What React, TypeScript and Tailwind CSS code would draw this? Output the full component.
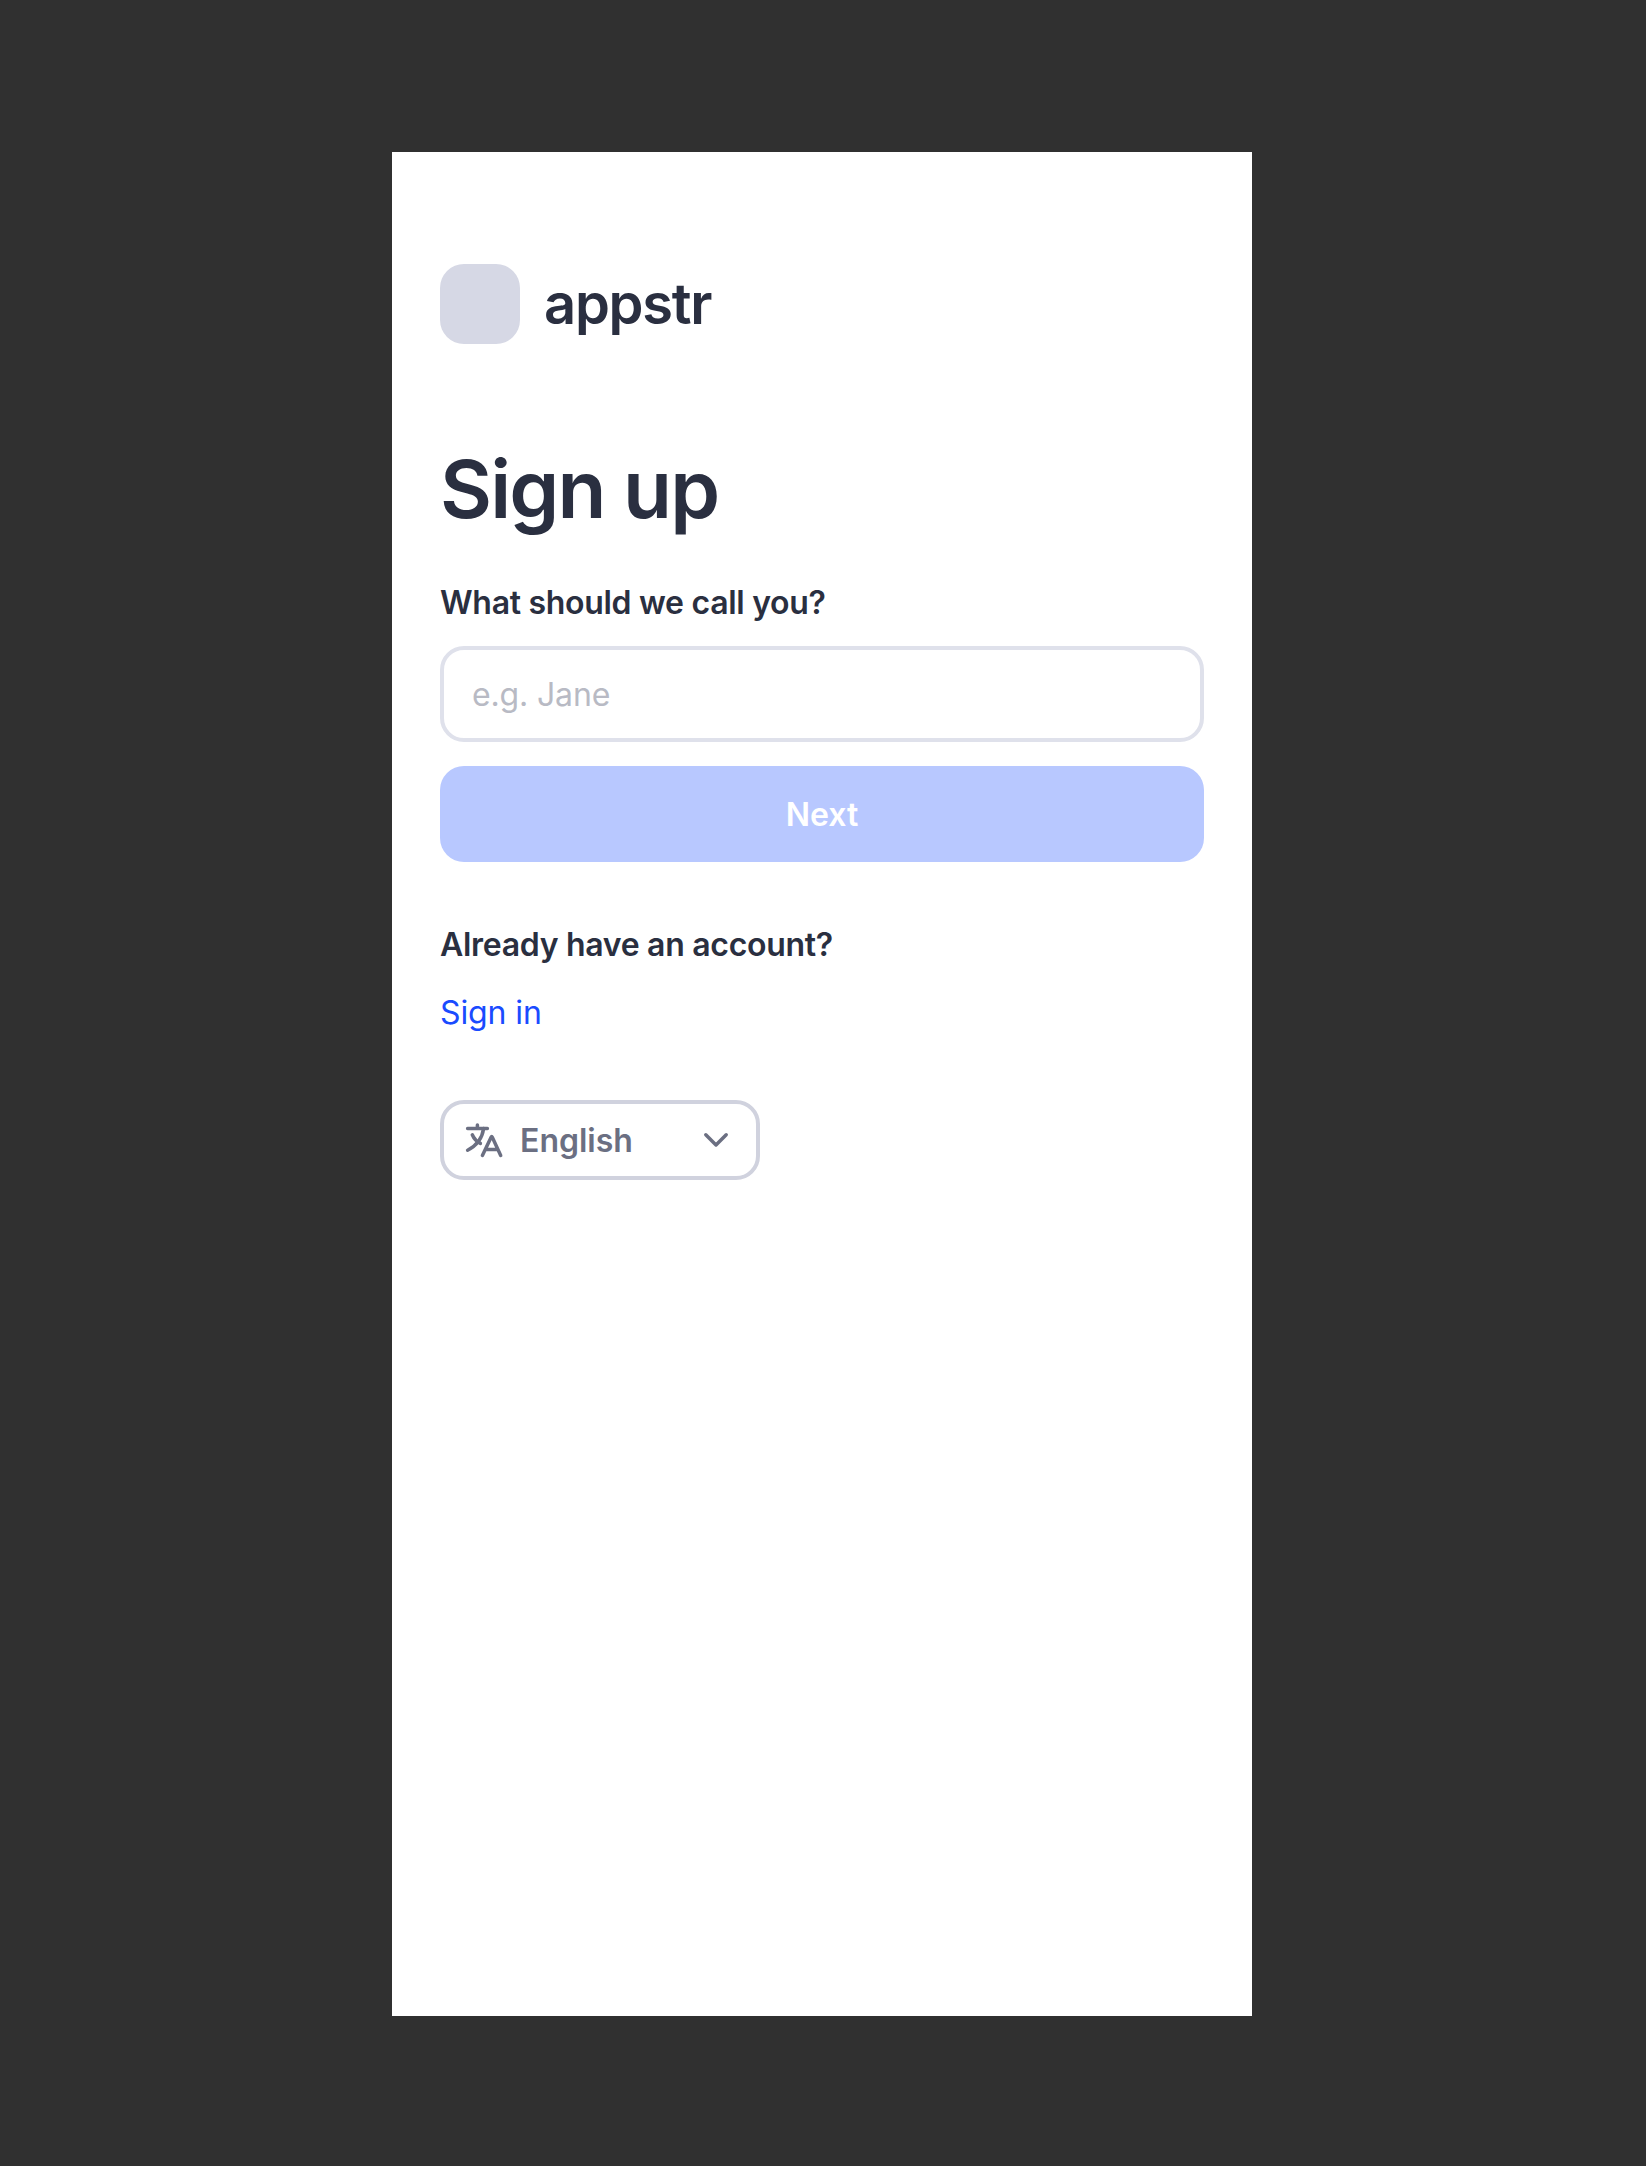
import React from "react";

function TranslateIcon() {
  return (
    <svg width="40" height="40" viewBox="0 0 40 40" fill="none" stroke="currentColor" strokeWidth="3.5" strokeLinecap="round" strokeLinejoin="round">
      <path d="M3.6 8.4H23.4M13.4 5.1V8.4" />
      <path d="M19.6 8.6C18.2 18.5 13 25.6 3.6 30.2" />
      <path d="M8.3 14.8C10 18.8 12.6 21.6 16.4 23.4" />
      <path d="M18.4 35.4L27.1 17.2Q27.7 16 28.3 17.2L36.7 35.4M21.6 29.4H33.6" />
    </svg>
  );
}

export default function App() {
  return (
    <div className="h-[2166px] w-full bg-[#303030] pt-38 font-['Inter',sans-serif] text-[32px] leading-10 text-[#2a2f40]">
      <main className="ml-[392px] flex h-[1864px] w-[860px] flex-col items-start bg-white px-12 pt-28">
        <div className="flex items-center gap-6">
          <div className="size-20 rounded-3xl bg-[#d6d8e5]" />
          <span className="text-[56px] leading-[64px] font-semibold tracking-[-0.0225em]">appstr</span>
        </div>
        <h1 className="mt-[97px] text-[80px] leading-24 font-semibold tracking-[-0.0225em]">Sign up</h1>
        <label htmlFor="name" className="mt-[46px] font-semibold tracking-[-0.3px]">What should we call you?</label>
        <input
          id="name"
          placeholder="e.g. Jane"
          className="mt-[23px] h-24 w-full rounded-3xl border-4 border-[#dfe1eb] px-7 font-normal tracking-[-0.15px] placeholder:text-[#b8bac4]"
        />
        <button className="mt-6 h-24 w-full rounded-3xl bg-[#b8c8ff] pt-0.5 font-semibold text-white">Next</button>
        <p className="mt-[63px] font-semibold tracking-[-0.3px]">Already have an account?</p>
        <a href="#" className="mt-7 font-normal tracking-[-0.1px] text-[#1a4bff]">Sign in</a>
        <button className="mt-[67px] flex h-20 w-80 items-center rounded-3xl border-4 border-[#d0d2de] pr-6 pl-5 font-semibold text-[#6b6f82]">
          <TranslateIcon />
          <span className="ml-4 pt-0.5">English</span>
          <svg className="ml-auto" width="32" height="32" viewBox="0 0 32 32" fill="none" stroke="currentColor" strokeWidth="3.5" strokeLinecap="round" strokeLinejoin="round">
            <path d="M5.8 10.8L16 20.9L26.2 10.8" />
          </svg>
        </button>
      </main>
    </div>
  );
}
